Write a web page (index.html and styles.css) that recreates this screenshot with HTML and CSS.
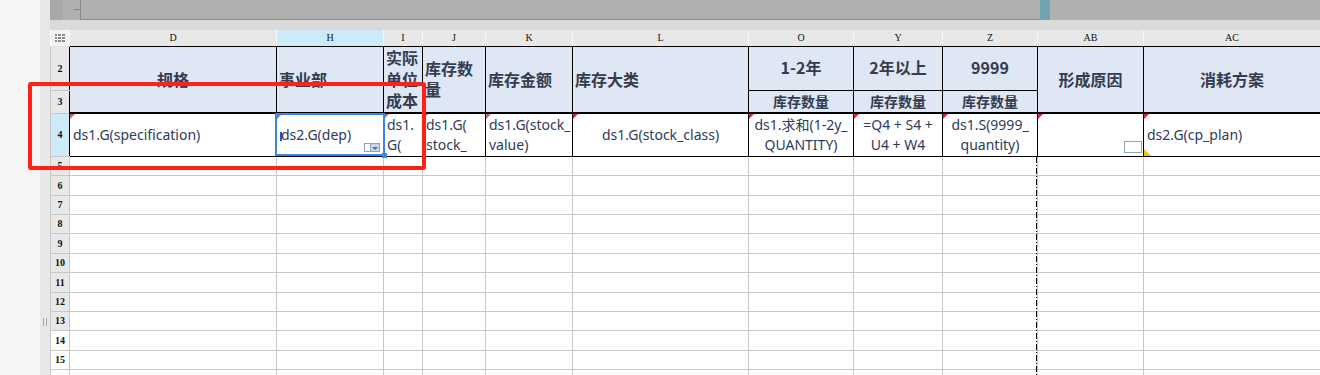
FILE: index.html
```html
<!DOCTYPE html>
<html>
<head>
    <title>报表设计</title>
    <link rel="stylesheet" href="styles.css">
</head>
<body>
<div class="app">
    <div class="side"></div>
    <div class="strip"><span class="grip"></span></div>

    <div class="main">
        <div class="topbar">
            <div class="tb-a"></div>
            <div class="tb-b"></div>
            <div class="tb-box"></div>
            <div class="tb-knob"></div>
            <div class="tb-rest"></div>
        </div>
        <div class="gapbar"></div>

        <table class="sheet">
            <colgroup>
                <col style="width:19px"><col style="width:207px"><col style="width:107px"><col style="width:39px">
                <col style="width:63px"><col style="width:87px"><col style="width:176px"><col style="width:105px">
                <col style="width:89px"><col style="width:95px"><col style="width:106px"><col style="width:177px">
            </colgroup>
            <tr class="colhead">
                <th class="corner">
                    <svg width="10" height="8" viewBox="0 0 10 8">
                        <g fill="#8a8a8a">
                            <rect x="0" y="0" width="2" height="2"/><rect x="3" y="0" width="3" height="2"/><rect x="7" y="0" width="3" height="2"/>
                            <rect x="0" y="3" width="2" height="2"/><rect x="3" y="3" width="3" height="2"/><rect x="7" y="3" width="3" height="2"/>
                            <rect x="0" y="6" width="2" height="2"/><rect x="3" y="6" width="3" height="2"/><rect x="7" y="6" width="3" height="2"/>
                        </g>
                    </svg>
                </th>
                <th>D</th><th class="sel">H</th><th>I</th><th>J</th><th>K</th><th>L</th>
                <th>O</th><th>Y</th><th>Z</th><th>AB</th><th>AC</th>
            </tr>

            <!-- header block -->
            <tr class="r2">
                <th class="rh dark">2</th>
                <td class="hd center" rowspan="2">规格</td>
                <td class="hd" rowspan="2">事业部</td>
                <td class="hd tight" rowspan="2">实际单位成本</td>
                <td class="hd" rowspan="2">库存数量</td>
                <td class="hd" rowspan="2">库存金额</td>
                <td class="hd" rowspan="2">库存大类</td>
                <td class="hd center">1-2年</td>
                <td class="hd center">2年以上</td>
                <td class="hd center">9999</td>
                <td class="hd center" rowspan="2">形成原因</td>
                <td class="hd center" rowspan="2">消耗方案</td>
            </tr>
            <tr class="r3">
                <th class="rh dark">3</th>
                <td class="hd sub">库存数量</td>
                <td class="hd sub">库存数量</td>
                <td class="hd sub">库存数量</td>
            </tr>

            <!-- data row -->
            <tr class="r4">
                <th class="rh dark sel">4</th>
                <td class="dt note dim">ds1.G(specification)</td>
                <td class="dt note dim"><span class="caret"></span>ds2.G(dep)<span class="dd"><i class="dd-l"></i><i class="dd-r"></i></span></td>
                <td class="dt note dim">ds1.<br>G(</td>
                <td class="dt note dim">ds1.G(<br>stock_</td>
                <td class="dt note dim">ds1.G(stock_<br>value)</td>
                <td class="dt note center">ds1.G(stock_class)</td>
                <td class="dt note center">ds1.求和(1-2y_<br>QUANTITY)</td>
                <td class="dt note center">=Q4 + S4 +<br>U4 + W4</td>
                <td class="dt note center">ds1.S(9999_<br>quantity)</td>
                <td class="dt note box"></td>
                <td class="dt note flag">ds2.G(cp_plan)</td>
            </tr>

            <tr class="h19"><th class="rh">5</th><td></td><td></td><td></td><td></td><td></td><td></td><td></td><td></td><td></td><td></td><td></td></tr>
            <tr class="h20"><th class="rh">6</th><td></td><td></td><td></td><td></td><td></td><td></td><td></td><td></td><td></td><td></td><td></td></tr>
            <tr class="h19"><th class="rh">7</th><td></td><td></td><td></td><td></td><td></td><td></td><td></td><td></td><td></td><td></td><td></td></tr>
            <tr class="h19"><th class="rh">8</th><td></td><td></td><td></td><td></td><td></td><td></td><td></td><td></td><td></td><td></td><td></td></tr>
            <tr class="h20"><th class="rh">9</th><td></td><td></td><td></td><td></td><td></td><td></td><td></td><td></td><td></td><td></td><td></td></tr>
            <tr class="h19"><th class="rh">10</th><td></td><td></td><td></td><td></td><td></td><td></td><td></td><td></td><td></td><td></td><td></td></tr>
            <tr class="h20"><th class="rh">11</th><td></td><td></td><td></td><td></td><td></td><td></td><td></td><td></td><td></td><td></td><td></td></tr>
            <tr class="h19"><th class="rh">12</th><td></td><td></td><td></td><td></td><td></td><td></td><td></td><td></td><td></td><td></td><td></td></tr>
            <tr class="h19"><th class="rh">13</th><td></td><td></td><td></td><td></td><td></td><td></td><td></td><td></td><td></td><td></td><td></td></tr>
            <tr class="h20"><th class="rh light">14</th><td></td><td></td><td></td><td></td><td></td><td></td><td></td><td></td><td></td><td></td><td></td></tr>
            <tr class="h19"><th class="rh light">15</th><td></td><td></td><td></td><td></td><td></td><td></td><td></td><td></td><td></td><td></td><td></td></tr>
            <tr class="h19"><th class="rh light"></th><td></td><td></td><td></td><td></td><td></td><td></td><td></td><td></td><td></td><td></td><td></td></tr>
        </table>
    </div>

    <!-- things drawn over the sheet -->
    <div class="selection"><span class="handle"></span></div>
    <div class="pagebreak"></div>
    <div class="markbox"></div>
</div>
</body>
</html>
```

FILE: styles.css
```css
* {
    box-sizing: border-box;
}

body {
    margin: 0;
    background: #f5f5f7;
    font-family: "Noto Sans", "Noto Sans CJK SC", sans-serif;
}

.app {
    position: relative;
    display: flex;
    width: 1320px;
    height: 375px;
    overflow: hidden;
}

.side {
    flex: none;
    width: 40px;
    background: #f5f5f7;
}

.strip {
    flex: none;
    width: 10px;
    background: #e8e8e8;
    display: flex;
    justify-content: center;
    align-items: flex-start;
    padding-top: 318px;
}

.grip {
    width: 4px;
    height: 8px;
    border-left: 1px solid #a8a8a8;
    border-right: 1px solid #a8a8a8;
}

.main {
    flex: 1;
    display: flex;
    flex-direction: column;
    background: #fff;
    min-width: 0;
}

/* top toolbar strip */
.topbar {
    flex: none;
    height: 20px;
    display: flex;
    background: #b0b0b0;
}

.tb-a {
    width: 13px;
    background: #a8a8a8;
}

.tb-b {
    width: 17px;
    display: flex;
    align-items: center;
    justify-content: flex-end;
    padding-bottom: 1px;
}

.tb-b::after {
    content: "";
    width: 6px;
    height: 1px;
    background: #8a8a8a;
}

.tb-box {
    width: 960px;
    border-left: 1px solid #8c8c8c;
    border-bottom: 1px solid #8c8c8c;
}

.tb-knob {
    width: 10px;
    background: #6fa3b0;
}

.tb-rest {
    flex: 1;
}

.gapbar {
    flex: none;
    height: 10px;
    background: #dadada;
}

/* sheet */
.sheet {
    width: 1270px;
    table-layout: fixed;
    border-collapse: collapse;
    color: #2f3b5a;
}

.sheet td,
.sheet th {
    padding: 0 3px;
    border: 1px solid #c8c8c8;
    vertical-align: middle;
    text-align: left;
}

.colhead {
    height: 16px;
}

.colhead th {
    padding: 0;
    background: #e8e8e8;
    border-color: #f7f7f7;
    border-top: none;
    border-bottom: 1px solid #000;
    font: 10px "Liberation Serif", serif;
    color: #111;
    text-align: center;
}

.colhead th.sel {
    background: #cdeaf8;
}

.colhead th.corner {
    background: #f2f2f2;
    border-left: none;
    border-bottom: 1px solid #e0e0e0;
    line-height: 0;
}

.rh {
    padding: 0;
    background: #e8e8e8;
    border-left: none;
    border-color: #d4d4d4;
    font: bold 10px "Liberation Serif", serif;
    color: #111;
    text-align: center !important;
}

.rh.dark {
    border-right: 1px solid #000;
}

.rh.sel {
    background: #cdeaf8;
}

.rh.light {
    background: #fff;
}

.r2 { height: 44px; }
.r3 { height: 23px; }
.r4 { height: 43px; }
.h19 { height: 19px; }
.h20 { height: 20px; }

.hd {
    background: #dfe6f4;
    border: 1px solid #000 !important;
    font-weight: bold;
    font-size: 16px;
    line-height: 21.5px;
    font-family: "Noto Sans CJK SC", sans-serif;
    color: #343c50;
    padding: 0 2px !important;
}

.hd.sub {
    font-size: 14px;
    text-align: center;
}

.center {
    text-align: center !important;
}

.dt {
    position: relative;
    border: 1px solid #000 !important;
    border-top: 2px solid #000 !important;
    font-size: 14px;
    line-height: 20px;
    color: #2f3b5a;
}

/* comment corner marks */
.note::before {
    content: "";
    position: absolute;
    top: 0;
    left: 0;
    border-top: 5px solid #e5213f;
    border-right: 5px solid transparent;
}

.note.dim::before {
    border-top-color: #be6a7a;
}

.flag::after {
    content: "";
    position: absolute;
    bottom: 0;
    left: 0;
    border-bottom: 7px solid #f4c100;
    border-right: 7px solid transparent;
}

.box::after {
    content: "";
    position: absolute;
    right: 1px;
    bottom: 3px;
    width: 16px;
    height: 10px;
    border: 1px solid #8ea5c8;
    background: #fff;
}

.caret {
    display: inline-block;
    width: 2px;
    height: 9px;
    margin-right: -1px;
    vertical-align: -1px;
    background: #2356e0;
}

.dd {
    position: absolute;
    right: 3px;
    bottom: 4px;
    display: flex;
}

.dd i {
    display: block;
    width: 7px;
    height: 9px;
}

.dd-l {
    border: 1px solid #8fa0c0;
    background: #fff;
}

.dd-r {
    width: 9px !important;
    background: #c9d5ea;
    border: 1px solid #8fa0c0;
    border-left: none;
    position: relative;
}

.dd-r::after {
    content: "";
    position: absolute;
    left: 1px;
    top: 3px;
    border-top: 3px solid #5a6e98;
    border-left: 3px solid transparent;
    border-right: 3px solid transparent;
}

/* overlays */
.selection {
    position: absolute;
    left: 275px;
    top: 113px;
    width: 110px;
    height: 43px;
    border: 2px solid #3a86e6;
}

.handle {
    position: absolute;
    right: -4px;
    bottom: -4px;
    width: 5px;
    height: 5px;
    background: #3a86e6;
}

.pagebreak {
    position: absolute;
    left: 1036px;
    top: 157px;
    width: 1px;
    height: 218px;
    background: repeating-linear-gradient(to bottom, #000 0 6px, transparent 6px 8px, #000 8px 9px, transparent 9px 11px);
}

.markbox {
    position: absolute;
    left: 28px;
    top: 82px;
    width: 398px;
    height: 88px;
    border: 4px solid #fe2117;
    border-radius: 3px;
}
```
